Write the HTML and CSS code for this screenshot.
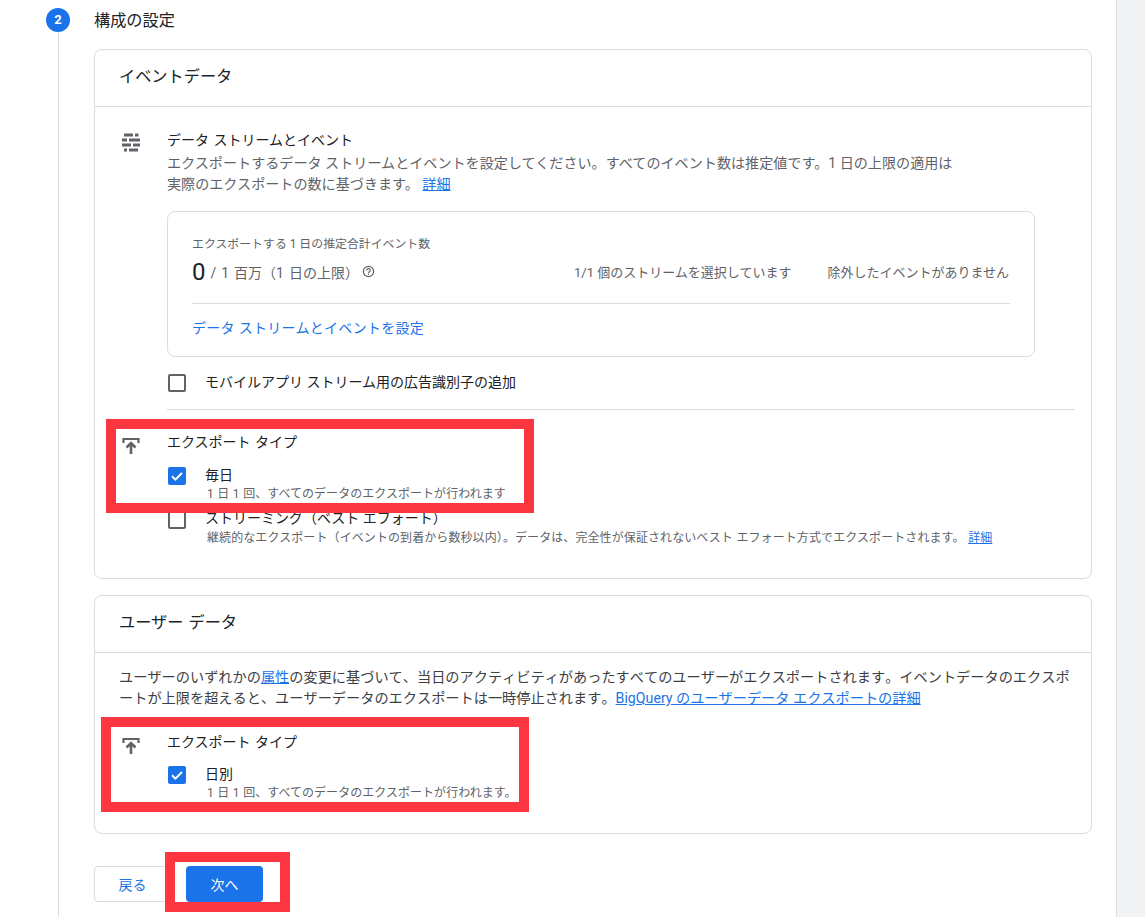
FILE: index.html
```html
<!DOCTYPE html>
<html lang="ja">
<head>
    <meta charset="UTF-8">
    <title>構成の設定</title>
    <link rel="stylesheet" href="styles.css">
</head>
<body>
    <div class="page">
        <main class="main">
            <div class="step-head">
                <span class="step-num">2</span>
                <span class="step-title">構成の設定</span>
            </div>
            <div class="step-body">
                <section class="card">
                    <h2 class="card-title">イベントデータ</h2>
                    <div class="card-content event-content">
                        <div class="row">
                            <svg class="row-icon" viewBox="0 0 20 20"><path d="M3 2h9M14 2h3.500M1 7h5M8 7h11M1 12h9M12 12h7M3 17h3M8 17h9" fill="none" stroke="#5f6368" stroke-width="2.800"/></svg>
                            <div class="row-main">
                                <div class="row-title">データ ストリームとイベント</div>
                                <p class="desc">エクスポートするデータ ストリームとイベントを設定してください。すべてのイベント数は推定値です。1 日の上限の適用は<br>実際のエクスポートの数に基づきます。 <a class="link" href="#">詳細</a></p>
                                <div class="summary">
                                    <div class="summary-label">エクスポートする 1 日の推定合計イベント数</div>
                                    <div class="summary-stats">
                                        <div class="count"><span class="count-num">0</span> / 1 百万（1 日の上限）
                                            <svg class="help" viewBox="0 0 24 24"><circle cx="12" cy="12" r="9.500" fill="none" stroke="#5f6368" stroke-width="2.200"/><path d="M8.800 10a3.200 3.200 0 1 1 4.800 2.700c-1 .6-1.600 1.100-1.600 2.300" fill="none" stroke="#5f6368" stroke-width="2.200"/><rect x="11" y="16.500" width="2" height="2" fill="#5f6368"/></svg>
                                        </div>
                                        <div class="stat">1/1 個のストリームを選択しています</div>
                                        <div class="stat">除外したイベントがありません</div>
                                    </div>
                                    <a class="summary-link" href="#">データ ストリームとイベントを設定</a>
                                </div>
                                <div class="option option-ads">
                                    <span class="checkbox"></span>
                                    <div class="option-label">モバイルアプリ ストリーム用の広告識別子の追加</div>
                                </div>
                            </div>
                        </div>
                        <div class="divider"></div>
                        <div class="row">
                            <svg class="row-icon upload" viewBox="0 0 20 20"><path d="M2.500 6V2h15v4" fill="none" stroke="#5f6368" stroke-width="2.200"/><path d="M10 17V6.500M5.500 10.500L10 6l4.500 4.500" fill="none" stroke="#5f6368" stroke-width="2.600"/></svg>
                            <div class="row-main">
                                <div class="row-title">エクスポート タイプ</div>
                                <div class="option option-first">
                                    <span class="checkbox checked"><svg viewBox="0 0 18 18"><path d="M4 9.200l3.400 3.400L14 6" fill="none" stroke="#fff" stroke-width="2"/></svg></span>
                                    <div>
                                        <div class="option-label">毎日</div>
                                        <div class="option-sub">1 日 1 回、すべてのデータのエクスポートが行われます</div>
                                    </div>
                                </div>
                                <div class="option option-stream">
                                    <span class="checkbox"></span>
                                    <div>
                                        <div class="option-label">ストリーミング（ベスト エフォート）</div>
                                        <div class="option-sub">継続的なエクスポート（イベントの到着から数秒以内）。データは、完全性が保証されないベスト エフォート方式でエクスポートされます。 <a class="link" href="#">詳細</a></div>
                                    </div>
                                </div>
                            </div>
                        </div>
                    </div>
                </section>

                <section class="card">
                    <h2 class="card-title">ユーザー データ</h2>
                    <div class="card-content user-content">
                        <p class="user-desc">ユーザーのいずれかの<a class="link" href="#">属性</a>の変更に基づいて、当日のアクティビティがあったすべてのユーザーがエクスポートされます。イベントデータのエクスポートが上限を超えると、ユーザーデータのエクスポートは一時停止されます。<a class="link" href="#">BigQuery のユーザーデータ エクスポートの詳細</a></p>
                        <div class="row">
                            <svg class="row-icon upload" viewBox="0 0 20 20"><path d="M2.500 6V2h15v4" fill="none" stroke="#5f6368" stroke-width="2.200"/><path d="M10 17V6.500M5.500 10.500L10 6l4.500 4.500" fill="none" stroke="#5f6368" stroke-width="2.600"/></svg>
                            <div class="row-main">
                                <div class="row-title">エクスポート タイプ</div>
                                <div class="option option-daily">
                                    <span class="checkbox checked"><svg viewBox="0 0 18 18"><path d="M4 9.200l3.400 3.400L14 6" fill="none" stroke="#fff" stroke-width="2"/></svg></span>
                                    <div>
                                        <div class="option-label">日別</div>
                                        <div class="option-sub">1 日 1 回、すべてのデータのエクスポートが行われます。</div>
                                    </div>
                                </div>
                            </div>
                        </div>
                    </div>
                </section>

                <div class="actions">
                    <button class="btn btn-back">戻る</button>
                    <button class="btn btn-next">次へ</button>
                </div>
            </div>
        </main>
        <aside class="side"></aside>

        <!-- red annotations drawn on top of the screenshot -->
        <div class="mark mark-daily"></div>
        <div class="mark mark-user"></div>
        <div class="mark mark-next"></div>
    </div>
</body>
</html>
```

FILE: styles.css
```css
* {
    margin: 0;
    padding: 0;
    box-sizing: border-box;
}

body {
    font-family: Roboto, "Noto Sans CJK JP", sans-serif;
    color: #202124;
    background: white;
    overflow: hidden;
}

.page {
    position: relative;
    display: flex;
    height: 917px;
    overflow: hidden;
}

.main {
    flex: 0 0 1117px;
    border-right: 1px solid #dadce0;
    padding-left: 46px;
    padding-top: 8px;
}

.side {
    flex: 1;
    background: #f1f3f4;
}

.step-head {
    display: flex;
    align-items: center;
    gap: 24px;
    height: 24px;
}

.step-num {
    width: 24px;
    height: 24px;
    border-radius: 50%;
    background: #1a73e8;
    color: white;
    font-size: 13px;
    font-weight: 700;
    line-height: 24px;
    text-align: center;
}

.step-title {
    padding-top: 2px;
    font-size: 16.200px;
    line-height: 24px;
}

.step-body {
    margin-left: 12px;
    height: 900px;
    border-left: 1px solid #dadce0;
    padding: 17px 24px 0 35px;
}

.card {
    border: 1px solid #dadce0;
    border-radius: 8px;
    margin-bottom: 16px;
}

.card-title {
    height: 57px;
    padding: 0 24px;
    font-size: 16.200px;
    font-weight: 400;
    word-spacing: 1px;
    line-height: 54px;
    border-bottom: 1px solid #dadce0;
}

.event-content {
    height: 471px;
    padding: 23px 16px 0 24px;
}

.user-content {
    height: 180px;
    padding: 14px 16px 0 24px;
}

.row {
    display: flex;
}

.row-icon {
    flex: none;
    width: 20px;
    height: 20px;
    margin: 3px 26px 0 2px;
}

.upload {
    margin-top: 5px;
}

.row-main {
    flex: 1;
    min-width: 0;
}

.row-title {
    font-size: 14px;
    word-spacing: 1px;
    line-height: 20px;
}

.desc {
    margin-top: 3px;
    font-size: 14.100px;
    line-height: 21px;
    color: #5f6368;
}

.link {
    color: #1a73e8;
    text-decoration: underline;
}

.summary {
    width: 868px;
    height: 146px;
    margin-top: 16px;
    padding: 23px 24px 0;
    border: 1px solid #dadce0;
    border-radius: 8px;
}

.summary-label {
    font-size: 11.900px;
    line-height: 18px;
    color: #5f6368;
}

.summary-stats {
    display: flex;
    align-items: center;
    height: 51px;
    padding-bottom: 13px;
    border-bottom: 1px solid #dadce0;
}

.count {
    display: flex;
    align-items: center;
    gap: 5px;
    width: 382px;
    font-size: 14px;
    word-spacing: 1.500px;
    color: #5f6368;
    white-space: nowrap;
}

.count-num {
    font-size: 24px;
    line-height: 28px;
    color: #202124;
}

.help {
    width: 13px;
    height: 13px;
    margin-left: -2px;
}

.stat {
    font-size: 13px;
    color: #5f6368;
    white-space: nowrap;
}

.stat + .stat {
    margin-left: 36px;
}

.summary-link {
    display: block;
    margin-top: 14px;
    font-size: 14px;
    letter-spacing: 0.300px;
    line-height: 20px;
    color: #1a73e8;
    text-decoration: none;
}

.option {
    display: flex;
}

.checkbox {
    flex: none;
    width: 18px;
    height: 18px;
    margin-right: 19px;
    margin-left: 1px;
    border: 2px solid #5f6368;
    border-radius: 2px;
}

.checkbox.checked {
    background: #1a73e8;
    border: none;
}

.checkbox svg {
    display: block;
}

.option-ads {
    margin-top: 17px;
}

.option-first {
    margin-top: 15px;
}

.option-daily {
    margin-top: 14px;
}

.option-stream {
    margin-top: 8px;
}

.option-label {
    margin-top: -1px;
    font-size: 14px;
    line-height: 18px;
}

.option-sub {
    margin-top: 2px;
    margin-left: 2px;
    font-size: 12px;
    letter-spacing: 0.040px;
    word-spacing: 0.500px;
    line-height: 17px;
    color: #5f6368;
    white-space: nowrap;
}

.option-stream .option-label {
    margin-top: -2px;
}

.option-stream .option-sub {
    margin-top: 3px;
    letter-spacing: 0.090px;
}

.divider {
    height: 1px;
    margin: 17px 0 22px 48px;
    background: #dadce0;
}

.user-desc {
    margin-bottom: 23px;
    font-size: 14.200px;
    font-kerning: none;
    line-height: 21px;
    color: #3c4043;
}

.actions {
    display: flex;
    gap: 15px;
    margin-top: 32px;
}

.btn {
    height: 36px;
    border-radius: 4px;
    font-family: inherit;
    font-size: 14px;
}

.btn-back {
    width: 77px;
    border: 1px solid #dadce0;
    background: white;
    color: #1a73e8;
}

.btn-next {
    width: 77px;
    border: none;
    background: #1a73e8;
    color: white;
}

.mark {
    position: absolute;
    border: 10px solid #fc3640;
}

.mark-daily {
    left: 106px;
    top: 419px;
    width: 428px;
    height: 94px;
}

.mark-user {
    left: 101px;
    top: 717px;
    width: 428px;
    height: 95px;
}

.mark-next {
    left: 165px;
    top: 852px;
    width: 125px;
    height: 60px;
}
```
